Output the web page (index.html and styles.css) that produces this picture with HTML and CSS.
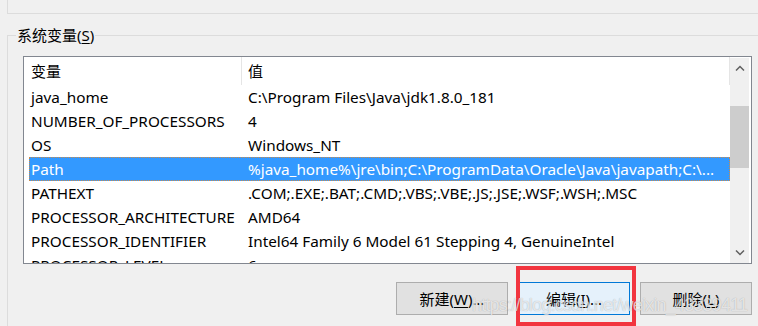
FILE: index.html
```html
<!DOCTYPE html>
<html lang="zh-CN">
<head>
  <meta charset="UTF-8">
  <title>系统变量</title>
  <link rel="stylesheet" href="styles.css">
</head>
<body>
  <div class="user-group"></div>

  <section class="group">
    <h2 class="group-title">系统变量(<u>S</u>)</h2>
    <div class="group-body">
      <div class="listview">
        <div class="list-body">
          <div class="list-head">
            <div class="col-name">变量</div>
            <div class="col-value">值</div>
          </div>
          <div class="row"><div class="col-name">java_home</div><div class="col-value">C:\Program Files\Java\jdk1.8.0_181</div></div>
          <div class="row"><div class="col-name">NUMBER_OF_PROCESSORS</div><div class="col-value">4</div></div>
          <div class="row"><div class="col-name">OS</div><div class="col-value">Windows_NT</div></div>
          <div class="row selected"><div class="col-name">Path</div><div class="col-value">%java_home%\jre\bin;C:\ProgramData\Oracle\Java\javapath;C:\...</div></div>
          <div class="row"><div class="col-name">PATHEXT</div><div class="col-value">.COM;.EXE;.BAT;.CMD;.VBS;.VBE;.JS;.JSE;.WSF;.WSH;.MSC</div></div>
          <div class="row"><div class="col-name">PROCESSOR_ARCHITECTURE</div><div class="col-value">AMD64</div></div>
          <div class="row"><div class="col-name">PROCESSOR_IDENTIFIER</div><div class="col-value">Intel64 Family 6 Model 61 Stepping 4, GenuineIntel</div></div>
          <div class="row"><div class="col-name">PROCESSOR_LEVEL</div><div class="col-value">6</div></div>
        </div>
        <div class="scrollbar">
          <div class="arrow">
            <svg width="10" height="6" viewBox="0 0 10 6"><polyline points="1,5.5 5,1.5 9,5.5" fill="none" stroke="#606060" stroke-width="1.5"/></svg>
          </div>
          <div class="track"><div class="thumb"></div></div>
          <div class="arrow">
            <svg width="10" height="6" viewBox="0 0 10 6"><polyline points="1,0.5 5,4.5 9,0.5" fill="none" stroke="#606060" stroke-width="1.5"/></svg>
          </div>
        </div>
      </div>

      <div class="buttons">
        <button class="btn">新建(<u>W</u>)...</button>
        <button class="btn btn-default">编辑(<u>I</u>)...</button>
        <button class="btn">删除(<u>L</u>)</button>
      </div>
    </div>
  </section>

  <div class="mark"></div>
  <div class="watermark">https://blog.csdn.net/weixin_43339411</div>
</body>
</html>
```

FILE: styles.css
```css
html, body {
    margin: 0;
    width: 758px;
    height: 326px;
    overflow: hidden;
}
body {
    position: relative;
    background-color: #f0f0f0;
    font-family: "Noto Sans", "Noto Sans CJK SC", sans-serif;
    font-size: 15px;
    color: #000;
}
u {
    text-decoration-thickness: 1px;
    text-underline-offset: 2px;
}

/* bottom of the user variables box above */
.user-group {
    margin-left: 7px;
    height: 13px;
    border-left: 1px solid #dcdcdc;
    border-bottom: 1px solid #dcdcdc;
}

.group {
    margin: 21px 0 0 7px;
    height: 300px;
    border-top: 1px solid #dcdcdc;
    border-left: 1px solid #dcdcdc;
}
.group-title {
    display: block;
    width: fit-content;
    margin: -11px 0 0 8px;
    padding: 0 1px;
    font-size: 15px;
    font-weight: normal;
    line-height: 20px;
    background-color: #f0f0f0;
}
.group-body {
    width: 729px;
    margin: 11px 0 0 15px;
}

/* list view */
.listview {
    display: flex;
    box-sizing: border-box;
    height: 208px;
    border: 1px solid #828790;
    background-color: #fff;
    font-size: 15.3px;
}
.list-body {
    flex: 1;
    overflow: hidden;
}
.list-head {
    display: flex;
    height: 28px;
    line-height: 28px;
    font-size: 15px;
}
.list-head .col-name {
    box-sizing: border-box;
    width: 218px;
    padding-left: 7px;
    border-right: 1px solid #e5e5e5;
}
.list-head .col-value {
    flex: 1;
    padding-left: 6px;
    border-right: 1px solid #e5e5e5;
}
.row {
    display: flex;
    height: 24px;
    line-height: 24px;
    margin-left: 5px;
    white-space: nowrap;
}
.row .col-name {
    width: 210px;
    padding-left: 2px;
}
.row .col-value {
    flex: 1;
    padding-left: 7px;
    overflow: hidden;
}
.row.selected {
    background-color: #3399ff;
    color: #fff;
    outline: 1px dotted #c98a4b;
    outline-offset: -1px;
}

.scrollbar {
    display: flex;
    flex-direction: column;
    width: 19px;
    margin: 1px 2px 0 0;
    background-color: #f0f0f0;
}
.arrow {
    display: flex;
    align-items: center;
    justify-content: center;
    height: 20px;
}
.track {
    flex: 1;
}
.thumb {
    margin-top: 28px;
    height: 62px;
    background-color: #cdcdcd;
}

/* buttons */
.buttons {
    display: flex;
    justify-content: flex-end;
    gap: 10px;
    margin-top: 18px;
}
.btn {
    box-sizing: border-box;
    width: 112px;
    height: 33px;
    padding: 0;
    border: 1px solid #adadad;
    background-color: #e1e1e1;
    font-family: "Noto Sans", "Noto Sans CJK SC", sans-serif;
    font-size: 15px;
    color: #000;
}
.btn-default {
    border-color: #0078d7;
    background-color: #e5f1fb;
}

/* annotation and watermark on top of the screenshot */
.mark {
    position: absolute;
    left: 516px;
    top: 266px;
    width: 120px;
    height: 60px;
    box-sizing: border-box;
    border: 4px solid #f2353f;
}
.watermark {
    position: absolute;
    left: 472px;
    top: 295px;
    font-family: "Liberation Sans", Arial, sans-serif;
    font-size: 18px;
    letter-spacing: -0.8px;
    color: rgba(255, 255, 255, 0.7);
    text-shadow: 0 0 1px rgba(0, 0, 0, 0.3);
    white-space: nowrap;
}
```
